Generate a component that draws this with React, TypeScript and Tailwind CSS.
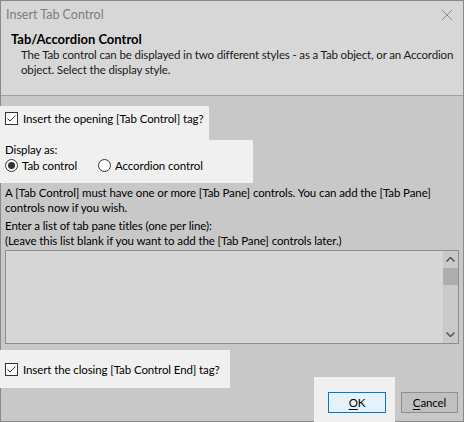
import { X } from 'lucide-react'

function CheckBox() {
  return (
    <div className="w-[13px] h-[13px] shrink-0 border border-[#333333] bg-white flex items-center justify-center">
      <svg width="11" height="11" viewBox="0 0 11 11">
        <path d="M1.5 5.5 L4 8 L9.5 2.5" fill="none" stroke="#333333" strokeWidth="1" />
      </svg>
    </div>
  )
}

function Radio({ checked }: { checked?: boolean }) {
  return (
    <div className="w-[13px] h-[13px] shrink-0 rounded-full border border-[#333333] bg-white flex items-center justify-center">
      {checked && <div className="w-[7px] h-[7px] rounded-full bg-[#333333]" />}
    </div>
  )
}

export default function App() {
  return (
    <div className="relative w-[464px] h-[422px] bg-[#c8c8c8] text-[11.5px] tracking-[-0.1px] leading-[15px] text-black overflow-hidden whitespace-nowrap font-['Segoe_UI','Lato',sans-serif]">
      {/* Title + header */}
      <div className="h-[96px] bg-[#d7d7d7] border-b border-[#a0a0a0]">
        <div className="h-[29px] flex items-center justify-between pl-[6px] pr-[7px]">
          <span className="text-[12.5px] tracking-normal text-[#7d7d7d]">Insert Tab Control</span>
          <X size={20} strokeWidth={1} className="text-[#7d7d7d]" />
        </div>
        <div className="pl-[11px] mt-[2px]">
          <div className="text-[13px] tracking-normal font-bold leading-[16px]">Tab/Accordion Control</div>
          <div className="pl-[10px] text-[#1a1a1a] tracking-[-0.15px]">
            <div>The Tab control can be displayed in two different styles - as a Tab object, or an Accordion</div>
            <div>object. Select the display style.</div>
          </div>
        </div>
      </div>

      {/* Opening tag */}
      <div className="relative z-10 mt-[10px] w-[209px] h-[34px] bg-[#f0f0f0] pt-[6px] pl-[5px]">
        <div className="flex items-center gap-[5px] h-[13px]">
          <CheckBox />
          <span>Insert the opening [Tab Control] tag?</span>
        </div>
      </div>

      {/* Display as */}
      <div className="relative z-10 w-[253px] h-[43px] bg-[#f0f0f0] pt-[3px] pl-[5px]">
        <div className="leading-[14px]">Display as:</div>
        <div className="flex items-center h-[13px] mt-[2px]">
          <div className="flex items-center gap-[4px] w-[93px]">
            <Radio checked />
            <span>Tab control</span>
          </div>
          <div className="flex items-center gap-[4px]">
            <Radio />
            <span>Accordion control</span>
          </div>
        </div>
      </div>

      {/* Info text */}
      <div className="px-[5px] mt-[2px]">
        <div>A [Tab Control] must have one or more [Tab Pane] controls. You can add the [Tab Pane]</div>
        <div>controls now if you wish.</div>
        <div className="mt-[3px]">Enter a list of tab pane titles (one per line):</div>
        <div>(Leave this list blank if you want to add the [Tab Pane] controls later.)</div>
      </div>

      {/* Text list */}
      <div className="ml-[5px] mt-[2px] w-[454px] h-[94px] border border-[#8e8e8e] bg-[#d6d6d6] flex justify-end">
        <div className="w-[15px] h-full bg-[#c9c9c9] flex flex-col items-center">
          <div className="h-[17px] w-full flex items-center justify-center">
            <svg width="9" height="5" viewBox="0 0 9 5">
              <path d="M0.5 4.5 L4.5 0.5 L8.5 4.5" fill="none" stroke="#555555" strokeWidth="1.5" />
            </svg>
          </div>
          <div className="w-full h-[17px] bg-[#adadad]" />
          <div className="flex-1" />
          <div className="h-[17px] w-full flex items-center justify-center">
            <svg width="9" height="5" viewBox="0 0 9 5">
              <path d="M0.5 0.5 L4.5 4.5 L8.5 0.5" fill="none" stroke="#555555" strokeWidth="1.5" />
            </svg>
          </div>
        </div>
      </div>

      {/* Bottom row */}
      <div className="flex items-start justify-between pr-[6px]">
        <div className="relative z-10 mt-[6px] w-[230px] h-[38px] bg-[#f0f0f0] pl-[5px] flex items-center gap-[5px]">
          <CheckBox />
          <span>Insert the closing [Tab Control End] tag?</span>
        </div>
        <div className="flex items-start gap-[6px] mt-[33px]">
          <div className="relative z-10 w-[81px] h-[45px] bg-[#f0f0f0] pt-[15px] pl-[14px]">
            <button className="w-[58px] h-[21px] border border-[#0078d7] bg-[#e5f1fb] flex items-center justify-center">
              <span><span className="underline underline-offset-2">O</span>K</span>
            </button>
          </div>
          <button className="mt-[15px] w-[57px] h-[21px] border border-[#8f8f8f] bg-[#c0c0c0] flex items-center justify-center">
            <span><span className="underline underline-offset-2">C</span>ancel</span>
          </button>
        </div>
      </div>

      {/* Window frame */}
      <div className="pointer-events-none absolute inset-0 border border-[#8a8a8a]" />
    </div>
  )
}
